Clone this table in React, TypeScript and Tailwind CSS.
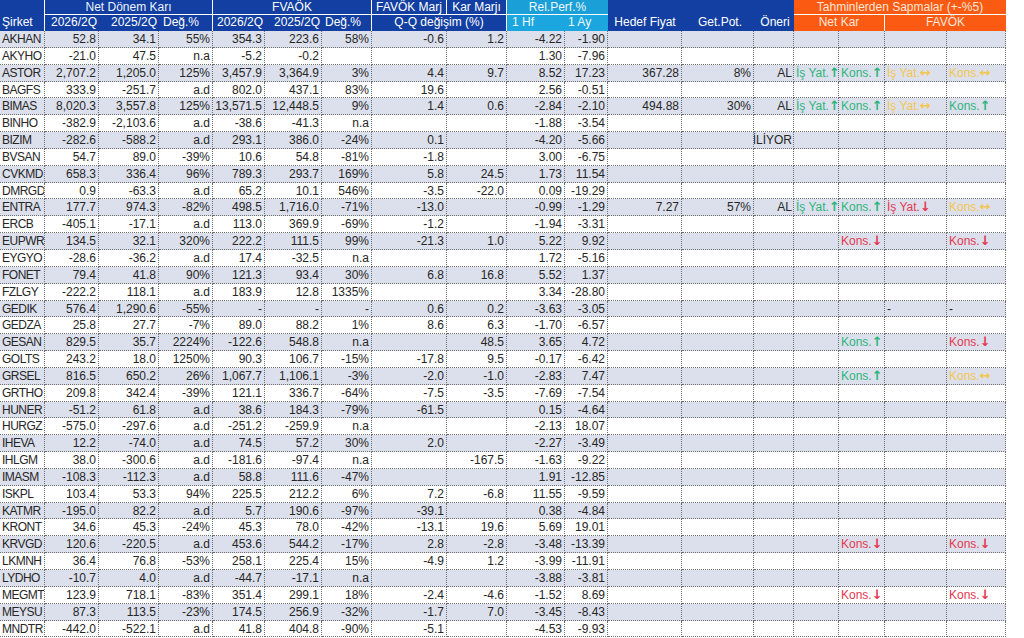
import React from "react";

const COLS =
  "grid grid-cols-[45px_54px_60px_54px_52px_57px_50px_75px_60px_58px_43px_74px_72px_40px_45px_46px_62px_59px]";

type Dev = [string, "g" | "r" | "y" | "d"] | null;

type Row = {
  n: string;
  v: string[];
  h?: [string, string, string];
  note?: string;
  d?: [Dev, Dev, Dev, Dev];
};

const G = (t: string): Dev => [t, "g"];
const R = (t: string): Dev => [t, "r"];
const Y = (t: string): Dev => [t, "y"];
const D = (t: string): Dev => [t, "d"];

const rows: Row[] = [
  { n: "AKHAN", v: ["52.8", "34.1", "55%", "354.3", "223.6", "58%", "-0.6", "1.2", "-4.22", "-1.90"] },
  { n: "AKYHO", v: ["-21.0", "47.5", "n.a", "-5.2", "-0.2", "", "", "", "1.30", "-7.96"] },
  {
    n: "ASTOR",
    v: ["2,707.2", "1,205.0", "125%", "3,457.9", "3,364.9", "3%", "4.4", "9.7", "8.52", "17.23"],
    h: ["367.28", "8%", "AL"],
    d: [G("İş Yat.↑"), G("Kons.↑"), Y("İş Yat.↔"), Y("Kons.↔")],
  },
  { n: "BAGFS", v: ["333.9", "-251.7", "a.d", "802.0", "437.1", "83%", "19.6", "", "2.56", "-0.51"] },
  {
    n: "BIMAS",
    v: ["8,020.3", "3,557.8", "125%", "13,571.5", "12,448.5", "9%", "1.4", "0.6", "-2.84", "-2.10"],
    h: ["494.88", "30%", "AL"],
    d: [G("İş Yat.↑"), G("Kons.↑"), Y("İş Yat.↔"), G("Kons.↑")],
  },
  { n: "BINHO", v: ["-382.9", "-2,103.6", "a.d", "-38.6", "-41.3", "n.a", "", "", "-1.88", "-3.54"] },
  {
    n: "BIZIM",
    v: ["-282.6", "-588.2", "a.d", "293.1", "386.0", "-24%", "0.1", "", "-4.20", "-5.66"],
    note: "GÖZDEN GEÇİRİLİYOR",
  },
  { n: "BVSAN", v: ["54.7", "89.0", "-39%", "10.6", "54.8", "-81%", "-1.8", "", "3.00", "-6.75"] },
  { n: "CVKMD", v: ["658.3", "336.4", "96%", "789.3", "293.7", "169%", "5.8", "24.5", "1.73", "11.54"] },
  { n: "DMRGD", v: ["0.9", "-63.3", "a.d", "65.2", "10.1", "546%", "-3.5", "-22.0", "0.09", "-19.29"] },
  {
    n: "ENTRA",
    v: ["177.7", "974.3", "-82%", "498.5", "1,716.0", "-71%", "-13.0", "", "-0.99", "-1.29"],
    h: ["7.27", "57%", "AL"],
    d: [G("İş Yat.↑"), G("Kons.↑"), R("İş Yat.↓"), Y("Kons.↔")],
  },
  { n: "ERCB", v: ["-405.1", "-17.1", "a.d", "113.0", "369.9", "-69%", "-1.2", "", "-1.94", "-3.31"] },
  {
    n: "EUPWR",
    v: ["134.5", "32.1", "320%", "222.2", "111.5", "99%", "-21.3", "1.0", "5.22", "9.92"],
    d: [null, R("Kons.↓"), null, R("Kons.↓")],
  },
  { n: "EYGYO", v: ["-28.6", "-36.2", "a.d", "17.4", "-32.5", "n.a", "", "", "1.72", "-5.16"] },
  { n: "FONET", v: ["79.4", "41.8", "90%", "121.3", "93.4", "30%", "6.8", "16.8", "5.52", "1.37"] },
  { n: "FZLGY", v: ["-222.2", "118.1", "a.d", "183.9", "12.8", "1335%", "", "", "3.34", "-28.80"] },
  {
    n: "GEDIK",
    v: ["576.4", "1,290.6", "-55%", "-", "-", "-", "0.6", "0.2", "-3.63", "-3.05"],
    d: [null, null, D("-"), D("-")],
  },
  { n: "GEDZA", v: ["25.8", "27.7", "-7%", "89.0", "88.2", "1%", "8.6", "6.3", "-1.70", "-6.57"] },
  {
    n: "GESAN",
    v: ["829.5", "35.7", "2224%", "-122.6", "548.8", "n.a", "", "48.5", "3.65", "4.72"],
    d: [null, G("Kons.↑"), null, R("Kons.↓")],
  },
  { n: "GOLTS", v: ["243.2", "18.0", "1250%", "90.3", "106.7", "-15%", "-17.8", "9.5", "-0.17", "-6.42"] },
  {
    n: "GRSEL",
    v: ["816.5", "650.2", "26%", "1,067.7", "1,106.1", "-3%", "-2.0", "-1.0", "-2.83", "7.47"],
    d: [null, G("Kons.↑"), null, Y("Kons.↔")],
  },
  { n: "GRTHO", v: ["209.8", "342.4", "-39%", "121.1", "336.7", "-64%", "-7.5", "-3.5", "-7.69", "-7.54"] },
  { n: "HUNER", v: ["-51.2", "61.8", "a.d", "38.6", "184.3", "-79%", "-61.5", "", "0.15", "-4.64"] },
  { n: "HURGZ", v: ["-575.0", "-297.6", "a.d", "-251.2", "-259.9", "n.a", "", "", "-2.13", "18.07"] },
  { n: "IHEVA", v: ["12.2", "-74.0", "a.d", "74.5", "57.2", "30%", "2.0", "", "-2.27", "-3.49"] },
  { n: "IHLGM", v: ["38.0", "-300.6", "a.d", "-181.6", "-97.4", "n.a", "", "-167.5", "-1.63", "-9.22"] },
  { n: "IMASM", v: ["-108.3", "-112.3", "a.d", "58.8", "111.6", "-47%", "", "", "1.91", "-12.85"] },
  { n: "ISKPL", v: ["103.4", "53.3", "94%", "225.5", "212.2", "6%", "7.2", "-6.8", "11.55", "-9.59"] },
  { n: "KATMR", v: ["-195.0", "82.2", "a.d", "5.7", "190.6", "-97%", "-39.1", "", "0.38", "-4.84"] },
  { n: "KRONT", v: ["34.6", "45.3", "-24%", "45.3", "78.0", "-42%", "-13.1", "19.6", "5.69", "19.01"] },
  {
    n: "KRVGD",
    v: ["120.6", "-220.5", "a.d", "453.6", "544.2", "-17%", "2.8", "-2.8", "-3.48", "-13.39"],
    d: [null, R("Kons.↓"), null, R("Kons.↓")],
  },
  { n: "LKMNH", v: ["36.4", "76.8", "-53%", "258.1", "225.4", "15%", "-4.9", "1.2", "-3.99", "-11.91"] },
  { n: "LYDHO", v: ["-10.7", "4.0", "a.d", "-44.7", "-17.1", "n.a", "", "", "-3.88", "-3.81"] },
  {
    n: "MEGMT",
    v: ["123.9", "718.1", "-83%", "351.4", "299.1", "18%", "-2.4", "-4.6", "-1.52", "8.69"],
    d: [null, R("Kons.↓"), null, R("Kons.↓")],
  },
  { n: "MEYSU", v: ["87.3", "113.5", "-23%", "174.5", "256.9", "-32%", "-1.7", "7.0", "-3.45", "-8.43"] },
  { n: "MNDTR", v: ["-442.0", "-522.1", "a.d", "41.8", "404.8", "-90%", "-5.1", "", "-4.53", "-9.93"] },
];

const cell =
  "border-r border-b border-dotted border-[#6f6f6f] overflow-hidden whitespace-nowrap leading-[16px]";

function DevCell({ d }: { d: Dev }) {
  let color = "text-[#262626]";
  if (d) {
    if (d[1] === "g") color = "text-[#2db57c]";
    else if (d[1] === "r") color = "text-[#e4384f]";
    else if (d[1] === "y") color = "text-[#f3c651]";
  }
  let body: React.ReactNode = "";
  if (d) {
    const t = d[0];
    if (t.length > 1) {
      body = (
        <>
          <span>{t.slice(0, -1)}</span>
          <span className="font-['DejaVu_Sans',sans-serif] text-[13px] leading-[14px] font-bold">{t.slice(-1)}</span>
        </>
      );
    } else {
      body = t;
    }
  }
  return <div className={`${cell} pl-[2px] text-left ${color}`}>{body}</div>;
}

function DataRow({ r, i }: { r: Row; i: number }) {
  const bg = i % 2 === 0 ? "bg-[#dce0ec]" : "bg-white";
  const d = r.d || [null, null, null, null];
  return (
    <div className={`${COLS} h-[16.85px] ${bg} text-[#262626]`}>
      <div className={`${cell} pl-[2px] text-left tracking-[-0.5px]`}>{r.n}</div>
      {r.v.map((x, k) => (
        <div key={k} className={`${cell} pr-[2px] text-right`}>
          {x}
        </div>
      ))}
      <div className={`${cell} pr-[2px] text-right`}>{r.h ? r.h[0] : ""}</div>
      <div className={`${cell} pr-[2px] text-right`}>{r.h ? r.h[1] : ""}</div>
      <div className={`${cell} pr-[1px] flex justify-end`}>
        <span className="shrink-0">{r.h ? r.h[2] : r.note || ""}</span>
      </div>
      <DevCell d={d[0]} />
      <DevCell d={d[1]} />
      <DevCell d={d[2]} />
      <DevCell d={d[3]} />
    </div>
  );
}

export default function App() {
  const blue = "bg-[#123fa1]";
  const cyan = "bg-[#1a9fd6]";
  const orange = "bg-[#fb5a12]";
  return (
    <div className="w-[1024px] h-[638px] overflow-hidden bg-white font-['Liberation_Sans',Arial,sans-serif] text-[12px]">
      <div className="w-[1006px]">
        <div className={`${COLS} grid-rows-[15px_16px] text-white leading-[15px]`}>
          <div className={`${blue} row-span-2 col-start-1 border-r border-white flex items-end pl-[2px] pb-[1px]`}>
            Şirket
          </div>
          <div className={`${blue} col-span-3 border-r border-b border-white text-center text-[#eef2fb]`}>
            Net Dönem Karı
          </div>
          <div className={`${blue} col-span-3 border-r border-b border-white text-center`}>FVAÖK</div>
          <div className={`${blue} border-r border-b border-white text-center`}>FAVÖK Marj</div>
          <div className={`${blue} border-r border-b border-white text-center`}>Kar Marjı</div>
          <div className={`${cyan} col-span-2 border-b border-white text-center text-[#eef8fd]`}>Rel.Perf.%</div>
          <div className={`${blue} col-span-3`}></div>
          <div className={`${orange} col-span-4 border-b border-white text-center text-[#ffe6d8]`}>
            Tahminlerden Sapmalar (+-%5)
          </div>

          <div className={`${blue} text-right pr-[2px]`}>2026/2Q</div>
          <div className={`${blue} text-right pr-[2px]`}>2025/2Q</div>
          <div className={`${blue} border-r border-white text-left pl-[4px]`}>Değ.%</div>
          <div className={`${blue} text-right pr-[2px]`}>2026/2Q</div>
          <div className={`${blue} text-right pr-[2px]`}>2025/2Q</div>
          <div className={`${blue} border-r border-white text-left pl-[3px]`}>Değ.%</div>
          <div className={`${blue} col-span-2 border-r border-white text-center`}>Q-Q değişim (%)</div>
          <div className="bg-[#1ca6df] text-left pl-[5px] text-[#eef8fd]">1 Hf</div>
          <div className="bg-[#1ca6df] text-left pl-[3px] text-[#eef8fd]">1 Ay</div>
          <div className={`${blue} text-center`}>Hedef Fiyat</div>
          <div className={`${blue} text-center pl-[4px]`}>Get.Pot.</div>
          <div className={`${blue} text-center pl-[2px]`}>Öneri</div>
          <div className={`${orange} col-span-2 border-r border-white text-center text-[#ffe6d8]`}>Net Kar</div>
          <div className={`${orange} col-span-2 text-center text-[#ffe6d8]`}>FAVÖK</div>
        </div>
        {rows.map((r, i) => (
          <DataRow key={r.n} r={r} i={i} />
        ))}
      </div>
    </div>
  );
}
